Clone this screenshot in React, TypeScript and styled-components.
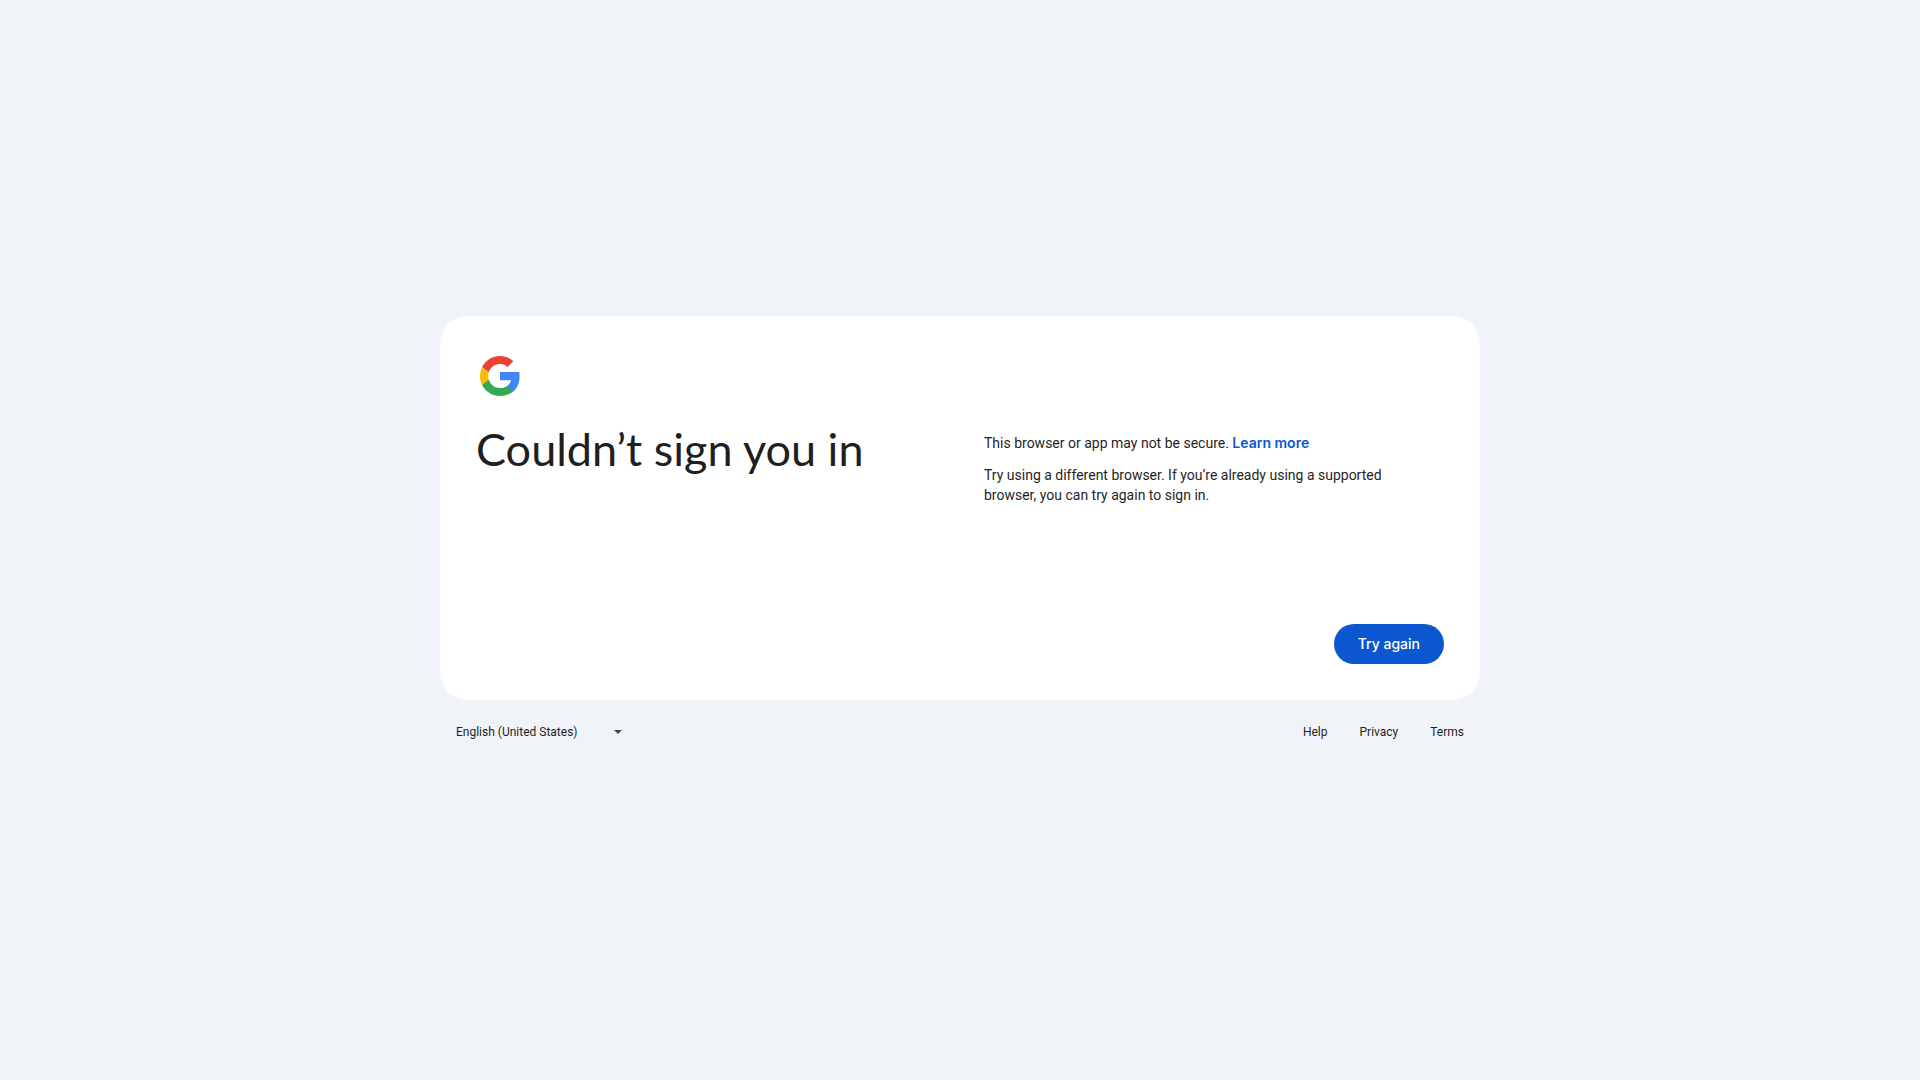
import React from "react";
import styled, { createGlobalStyle } from "styled-components";

const GlobalStyle = createGlobalStyle`
  *, *::before, *::after { box-sizing: border-box; }
  body {
    margin: 0;
    background: #f0f4f9;
    color: #1f1f1f;
    font-family: Roboto, "Liberation Sans", sans-serif;
    font-size: 14px;
    line-height: 20px;
  }
`;

const Page = styled.div`
  min-height: 100vh;
  display: flex;
  flex-direction: column;
  align-items: center;
  justify-content: center;
`;

const Column = styled.div`
  width: 100%;
  max-width: 1040px;
`;

const Card = styled.main`
  display: flex;
  flex-direction: column;
  min-height: 384px;
  padding: 36px;
  border-radius: 28px;
  background: #fff;
`;

const Logo = styled.svg`
  display: block;
  width: 48px;
  height: 48px;
`;

const Content = styled.div`
  flex: 1;
  display: grid;
  grid-template-columns: 1fr 1fr;
  padding-top: 24px;
`;

const Title = styled.h1`
  margin: 0;
  font-family: Lato, Roboto, sans-serif;
  font-size: 45px;
  font-weight: 400;
  line-height: 50px;
`;

const Message = styled.section`
  display: flex;
  flex-direction: column;
  gap: 12px;
  padding: 9px 24px 0;
`;

const Paragraph = styled.p`
  margin: 0;
`;

const InlineLink = styled.a`
  color: #0b57d0;
  font-family: Inter, Roboto, sans-serif;
  font-weight: 600;
  text-decoration: none;
`;

const Actions = styled.div`
  display: flex;
  justify-content: flex-end;
`;

const PrimaryButton = styled.button`
  height: 40px;
  padding: 0 24px;
  border: 0;
  border-radius: 20px;
  background: #0b57d0;
  color: #fff;
  font: 500 14px/20px Inter, Roboto, sans-serif;
  cursor: pointer;
`;

const Footer = styled.footer`
  display: flex;
  align-items: center;
  justify-content: space-between;
  height: 64px;
  padding: 0 16px;
  font-size: 12px;
  line-height: 16px;
`;

const LanguagePicker = styled.div`
  display: grid;
  align-items: center;
  width: 174px;

  & > * {
    grid-area: 1 / 1;
  }
`;

const Select = styled.select`
  appearance: none;
  width: 100%;
  height: 32px;
  padding: 0;
  border: 0;
  background: transparent;
  color: #1f1f1f;
  font: inherit;
  cursor: pointer;
`;

const Arrow = styled.svg`
  justify-self: end;
  width: 24px;
  height: 24px;
  pointer-events: none;
`;

const Links = styled.nav`
  display: flex;
  gap: 32px;
`;

const FooterLink = styled.a`
  color: #1f1f1f;
  text-decoration: none;
`;

export default function App() {
  return (
    <Page>
      <GlobalStyle />
      <Column>
        <Card>
          <Logo viewBox="0 0 48 48" role="img" aria-label="Google">
            <path fill="#4285F4" d="M43.6 24.46c0-1.56-.14-2.95-.38-4.34H24v8.1h11.01c-.5 2.5-1.96 4.6-4.12 6.03v5.24h6.66c3.89-3.59 6.05-8.87 6.05-15.03z" />
            <path fill="#34A853" d="M24 44c5.4 0 9.94-1.8 13.25-4.85l-6.47-5.02c-1.79 1.2-4.08 1.91-6.78 1.91-5.21 0-9.63-3.52-11.2-8.25H6.11v5.18C9.41 39.52 16.17 44 24 44z" />
            <path fill="#FABB05" d="M12.8 27.79c-.4-1.2-.63-2.47-.63-3.79s.23-2.59.63-3.79l-6.69-5.18A19.98 19.98 0 0 0 4 24c0 3.22.77 6.27 2.11 8.97z" />
            <path fill="#EA4335" d="M24 11.96c2.94 0 5.57 1.01 7.65 2.99l5.74-5.74C33.93 5.98 29.4 4 24 4 16.17 4 9.41 8.48 6.11 15.03l6.69 5.18c1.57-4.73 5.99-8.25 11.2-8.25z" />
          </Logo>
          <Content>
            <Title>Couldn’t sign you in</Title>
            <Message>
              <Paragraph>
                This browser or app may not be secure. <InlineLink href="#learn-more">Learn more</InlineLink>
              </Paragraph>
              <Paragraph>
                Try using a different browser. If you’re already using a supported browser, you can try again to sign in.
              </Paragraph>
            </Message>
          </Content>
          <Actions>
            <PrimaryButton type="button">Try again</PrimaryButton>
          </Actions>
        </Card>
        <Footer>
          <LanguagePicker>
            <Select aria-label="Language" defaultValue="en-US">
              <option value="en-US">English (United States)</option>
            </Select>
            <Arrow viewBox="0 0 24 24" aria-hidden="true">
              <path fill="#444746" d="M8 10l4 4 4-4z" />
            </Arrow>
          </LanguagePicker>
          <Links aria-label="Footer">
            <FooterLink href="#help">Help</FooterLink>
            <FooterLink href="#privacy">Privacy</FooterLink>
            <FooterLink href="#terms">Terms</FooterLink>
          </Links>
        </Footer>
      </Column>
    </Page>
  );
}
